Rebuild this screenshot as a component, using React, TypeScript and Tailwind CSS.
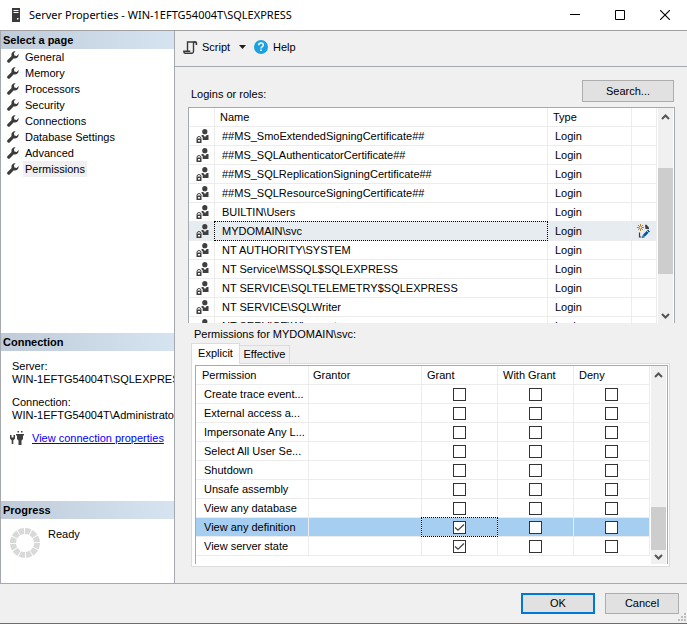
import { useState } from "react";
import type { ReactNode } from "react";

const PAGES = ["General", "Memory", "Processors", "Security", "Connections", "Database Settings", "Advanced", "Permissions"];

const LOGINS = [
  "##MS_SmoExtendedSigningCertificate##",
  "##MS_SQLAuthenticatorCertificate##",
  "##MS_SQLReplicationSigningCertificate##",
  "##MS_SQLResourceSigningCertificate##",
  "BUILTIN\\Users",
  "MYDOMAIN\\svc",
  "NT AUTHORITY\\SYSTEM",
  "NT Service\\MSSQL$SQLEXPRESS",
  "NT SERVICE\\SQLTELEMETRY$SQLEXPRESS",
  "NT SERVICE\\SQLWriter",
  "NT SERVICE\\Winmgmt",
];

const PERMISSIONS = [
  "Create trace event...",
  "External access a...",
  "Impersonate Any L...",
  "Select All User Se...",
  "Shutdown",
  "Unsafe assembly",
  "View any database",
  "View any definition",
  "View server state",
];

const MODES = ["Grant", "With Grant", "Deny"];

function ServerIcon() {
  return (
    <svg width="8" height="14" viewBox="0 0 8 14" aria-hidden="true">
      <path d="M0 0h8v14H0z" fill="#3a3a3a" />
      <path d="M1.500 2.500h5M1.500 4.500h5" stroke="#fff" />
      <path d="M5 10h1.500v1.500H5z" fill="#fff" />
    </svg>
  );
}

function WrenchIcon() {
  return (
    <svg width="12" height="12" viewBox="0 0 12 12" aria-hidden="true">
      <path
        d="M8.600 0.300a3.700 3.700 0 0 0-4 4.800L0.600 8.900a1.500 1.500 0 0 0 2.300 2.300l3.900-4a3.700 3.700 0 0 0 4.800-4.200L9.700 4.900 7.400 4.500 6.900 2.200z"
        fill="#3a3a3a"
      />
    </svg>
  );
}

function ScriptIcon() {
  return (
    <svg width="15" height="13" viewBox="0 0 15 13" fill="none" aria-hidden="true">
      <path d="M4.500 10V1H12.500M10.500 1v9.500q0 1.700-1.700 1.700H2.300Q.8 12.200.8 10.300H7.300" stroke="#3a3a3a" strokeWidth="1.400" />
      <path d="M10.500.3H12.700q1.500 0 1.500 1.600V4H12.600V2h-2.100z" fill="#3a3a3a" />
    </svg>
  );
}

function LoginIcon() {
  return (
    <svg width="13" height="14" viewBox="0 0 13 14" aria-hidden="true">
      <circle cx="8.800" cy="2.700" r="2.600" fill="#3f3f3f" />
      <path d="M5.500 6H7.200L9 8l1.800-2H12.500v5H6.700V8.300L5.500 7.300z" fill="#3f3f3f" />
      <path d="M1 9.500Q1 7.500 3 7.500T5 9.500" stroke="#3f3f3f" fill="none" />
      <path d="M.5 9.500H5.500V14H.5z" fill="#3f3f3f" />
      <path d="M2 11h2v1.500H2z" fill="#fff" />
    </svg>
  );
}

function EditedIcon() {
  return (
    <svg width="14" height="14" viewBox="0 0 14 14" fill="none" aria-hidden="true">
      <path d="M2.500 8.500v4.500H4.500" stroke="#3f3f3f" strokeWidth="1.200" />
      <path d="M8 .8H9.500L12 3.500V5H8.500z" fill="#3f3f3f" />
      <path d="M3.500 0v7M0 3.500h7M1 1l5 5M6 1L1 6" stroke="#c27d1a" />
      <circle cx="3.500" cy="3.500" r="1" fill="#fff" />
      <path d="M6.700 11.800L12 6.500" stroke="#00539c" strokeWidth="2.600" />
      <path d="M5 14l.6-2.800 2.100 2.100z" fill="#00539c" />
      <path d="M9.800 6.800l2 2" stroke="#fff" strokeWidth=".7" />
    </svg>
  );
}

function PlugIcon() {
  return (
    <svg width="14" height="14" viewBox="0 0 14 14" aria-hidden="true">
      <path d="M0 4h1.500v2.500h2V4H5v3.500L3.300 9.500V13H1.700V9.500L0 7.500z" fill="#3f3f3f" />
      <path d="M7.500 0H9v1.500H7.500zM11 0h1.500v1.500H11zM6 3h8v1.500h-1V8L11.500 9.500V14h-3V9.500L7 8V4.500H6z" fill="#3f3f3f" />
    </svg>
  );
}

function SectionTitle({ children }: { children: ReactNode }) {
  return (
    <h2 className="h-[18px] bg-linear-to-r from-[#bfcbd9] to-[#d6e4f1] pl-[2px] leading-[18px] font-bold">
      {children}
    </h2>
  );
}

function Chevron({ down }: { down?: boolean }) {
  return (
    <svg width="9" height="6" viewBox="0 0 9 6" fill="none" aria-hidden="true">
      <path d={down ? "M1 1l3.500 3.500L8 1" : "M1 5l3.500-3.500L8 5"} stroke="#555" strokeWidth="2" />
    </svg>
  );
}

function ScrollBar({ before, after, thumb }: { before: number; after: number; thumb: string }) {
  return (
    <div className="mr-px flex w-[15px] shrink-0 flex-col bg-[#f0f0f0]">
      <button aria-label="Scroll up" className="flex h-[18px] shrink-0 items-center justify-center">
        <Chevron />
      </button>
      <div style={{ flexGrow: before }} />
      <div className={`shrink-0 bg-[#cdcdcd] ${thumb}`} />
      <div style={{ flexGrow: after }} />
      <button aria-label="Scroll down" className="flex h-[14px] shrink-0 items-center justify-center">
        <Chevron down />
      </button>
    </div>
  );
}

const cell = "h-[19px] border-r border-b border-[#ececec] p-0 text-left font-normal whitespace-nowrap";
const focusRect = "pointer-events-none absolute -inset-px border border-dotted border-black";

export default function App() {
  const [page, setPage] = useState("Permissions");
  const [login, setLogin] = useState("MYDOMAIN\\svc");
  const [tab, setTab] = useState("Explicit");
  const [checks, setChecks] = useState<string[]>(["View any definition/Grant", "View server state/Grant"]);

  const toggle = (key: string) =>
    setChecks((prev) => (prev.includes(key) ? prev.filter((k) => k !== key) : [...prev, key]));

  return (
    <div className="flex min-h-screen flex-col border-b border-[#1883d7] bg-[#f0f0f0] font-['Liberation_Sans',Arial,sans-serif] text-[11px] leading-[13px] text-black">
      {/* Title bar */}
      <header className="flex h-[31px] items-center border-b border-[#a0a0a0] bg-white pl-3">
        <ServerIcon />
        <h1 className="ml-[9px] flex-1 truncate font-['Noto_Sans','Open_Sans',sans-serif] text-[11px] leading-[18px]">
          Server Properties - WIN-1EFTG54004T\SQLEXPRESS
        </h1>
        <button aria-label="Minimize" className="flex h-[28px] w-[45px] items-center justify-center">
          <svg width="10" height="10" viewBox="0 0 10 10"><path d="M0 4.500h10" stroke="#000" /></svg>
        </button>
        <button aria-label="Maximize" className="flex h-[28px] w-[45px] items-center justify-center">
          <svg width="10" height="10" viewBox="0 0 10 10" fill="none"><path d="M.5.5h9v9h-9z" stroke="#000" /></svg>
        </button>
        <button aria-label="Close" className="flex h-[28px] w-[45px] items-center justify-center">
          <svg width="10" height="10" viewBox="0 0 10 10"><path d="M0 0l10 10M10 0L0 10" stroke="#000" strokeWidth="1.100" /></svg>
        </button>
      </header>

      <div className="flex flex-1 border-b border-[#a7a9b0]">
        {/* Sidebar */}
        <aside className="flex w-[175px] shrink-0 flex-col overflow-hidden border-x border-[#a7a9b0] bg-white">
          <nav className="flex-1">
            <SectionTitle>Select a page</SectionTitle>
            <ul>
              {PAGES.map((p) => (
                <li key={p} className="flex h-[16px] items-center pl-[6px]">
                  <WrenchIcon />
                  <button
                    onClick={() => setPage(p)}
                    className={`ml-1 h-[16px] px-[2px] leading-[16px] ${p === page ? "bg-[#f0f0f0]" : ""}`}
                  >
                    {p}
                  </button>
                </li>
              ))}
            </ul>
          </nav>
          <section className="h-[168px]">
            <SectionTitle>Connection</SectionTitle>
            <dl className="pt-[9px] pl-[11px] whitespace-nowrap">
              <dt>Server:</dt>
              <dd className="mb-[10px]">WIN-1EFTG54004T\SQLEXPRESS</dd>
              <dt>Connection:</dt>
              <dd>WIN-1EFTG54004T\Administrator</dd>
            </dl>
            <div className="mt-[9px] flex items-center pl-[9px]">
              <PlugIcon />
              <a href="#connection" className="ml-2 whitespace-nowrap text-[#0000ff] underline">View connection properties</a>
            </div>
          </section>
          <section className="h-[82px]">
            <SectionTitle>Progress</SectionTitle>
            <div className="flex pt-[9px] pl-[9px]">
              <svg width="30" height="30" viewBox="0 0 30 30" fill="none" aria-hidden="true">
                <circle cx="15" cy="15" r="12" stroke="#d9d9d9" strokeWidth="6" pathLength="120" strokeDasharray="8.500 1.500" />
              </svg>
              <span className="ml-2">Ready</span>
            </div>
          </section>
        </aside>

        <main className="min-w-0 flex-1">
          {/* Toolbar */}
          <div className="flex h-[36px] items-center border-b border-[#a7a9b0] pb-[3px] pl-2">
            <button className="flex items-center">
              <ScriptIcon />
              <span className="ml-1 w-[28px] text-left">Script</span>
            </button>
            <button aria-label="Script options" className="ml-[9px]">
              <svg width="7" height="4" viewBox="0 0 7 4"><path d="M0 0h7L3.500 4z" fill="#1e1e1e" /></svg>
            </button>
            <button className="ml-2 flex items-center">
              <svg width="14" height="14" viewBox="0 0 14 14" fill="none" aria-hidden="true">
                <circle cx="7" cy="7" r="7" fill="#1ba1e2" />
                <path d="M4.700 5.300q0-2.300 2.300-2.300t2.300 2q0 1-1.200 1.800Q7 7.500 7 8.500" stroke="#fff" strokeWidth="1.500" />
                <path d="M6.200 9.500h1.600v1.600H6.200z" fill="#fff" />
              </svg>
              <span className="ml-[5px]">Help</span>
            </button>
          </div>

          <div className="pt-[13px] pr-3 pb-4 pl-[13px]">
            <div className="flex items-end justify-between pl-[3px]">
              <h2 className="leading-[16px]">Logins or roles:</h2>
              <button className="mr-px h-[22px] w-[92px] border border-[#adadad] bg-[#e1e1e1]">Search...</button>
            </div>

            {/* Logins */}
            <div className="mt-[5px] flex h-[216px] overflow-hidden border-x border-t border-[#a7a9b0] bg-white">
              <div className="mr-px min-w-0 flex-1 overflow-hidden">
                <table className="w-full table-fixed border-separate border-spacing-0">
                  <thead>
                    <tr>
                      <th className={`${cell} w-[26px]`} aria-label="Kind" />
                      <th className={`${cell} pl-[5px]`}>Name</th>
                      <th className={`${cell} w-[84px] pl-[5px]`}>Type</th>
                      <th className={`${cell} w-[25px]`} aria-label="Changed" />
                    </tr>
                  </thead>
                  <tbody>
                    {LOGINS.map((name) => (
                      <tr key={name} onClick={() => setLogin(name)} className={name === login ? "bg-[#e7ecf0]" : ""}>
                        <td className={cell}><span className="flex justify-center pl-[2px]"><LoginIcon /></span></td>
                        <td className={`${cell} relative pl-[7px]`}>
                          {name}
                          {name === login && <span className={focusRect} />}
                        </td>
                        <td className={`${cell} pl-[7px]`}>Login</td>
                        <td className={cell}>
                          {name === "MYDOMAIN\\svc" && <span className="flex justify-center"><EditedIcon /></span>}
                        </td>
                      </tr>
                    ))}
                  </tbody>
                </table>
              </div>
              <ScrollBar before={42} after={35} thumb="h-[106px]" />
            </div>

            <h2 className="mt-[3px] pl-[6px] leading-[16px]">Permissions for {login}:</h2>

            {/* Permissions */}
            <div className="mt-px mr-[5px] ml-[3px]">
              <div role="tablist" className="flex items-end">
                {["Explicit", "Effective"].map((t) => (
                  <button
                    key={t}
                    role="tab"
                    aria-selected={t === tab}
                    onClick={() => setTab(t)}
                    className={
                      t === tab
                        ? "relative -mb-px h-[21px] w-[49px] border border-b-0 border-[#dcdcdc] bg-white pb-[2px]"
                        : "h-[18px] w-[50px] border border-b-0 border-l-0 border-[#dcdcdc] bg-[#f0f0f0]"
                    }
                  >
                    {t}
                  </button>
                ))}
              </div>
              <div className="border border-[#dcdcdc] bg-white pt-px pr-px pb-[2px] pl-[3px]">
                <div className="flex h-[199px] border-x border-t border-[#a7a9b0]">
                  <div className="mr-px min-w-0 flex-1">
                    <table className="w-full table-fixed border-separate border-spacing-0">
                      <thead>
                        <tr>
                          <th className={`${cell} w-[113px] pl-[6px]`}>Permission</th>
                          <th className={`${cell} pl-[4px]`}>Grantor</th>
                          {MODES.map((m) => (
                            <th key={m} className={`${cell} w-[76px] pl-[5px]`}>{m}</th>
                          ))}
                        </tr>
                      </thead>
                      <tbody>
                        {PERMISSIONS.map((p) => {
                          const selected = p === "View any definition";
                          return (
                            <tr key={p} className={selected ? "bg-[#a5cef0]" : ""}>
                              <td className={`${cell} pl-[8px]`}>{p}</td>
                              <td className={cell} />
                              {MODES.map((m) => (
                                <td key={m} className={`${cell} relative`}>
                                  <label className="relative mx-auto block size-[13px]">
                                    <input
                                      type="checkbox"
                                      aria-label={`${m}: ${p}`}
                                      checked={checks.includes(`${p}/${m}`)}
                                      onChange={() => toggle(`${p}/${m}`)}
                                      className="peer block size-[13px] appearance-none border border-[#333] bg-white"
                                    />
                                    <svg width="13" height="13" viewBox="0 0 13 13" fill="none" className="pointer-events-none absolute inset-0 hidden peer-checked:block">
                                      <path d="M2 6.500l3 2.700L11 3.500" stroke="#444" strokeWidth="1.300" />
                                    </svg>
                                  </label>
                                  {selected && m === "Grant" && <span className={focusRect} />}
                                </td>
                              ))}
                            </tr>
                          );
                        })}
                      </tbody>
                    </table>
                  </div>
                  <ScrollBar before={1} after={0} thumb="h-[43px]" />
                </div>
              </div>
            </div>
          </div>
        </main>
      </div>

      {/* Dialog buttons */}
      <footer className="relative flex h-[39px] items-center justify-end gap-[10px] pr-2">
        <button className="h-[21px] w-[74px] border-2 border-[#0078d7] bg-[#e1e1e1]">OK</button>
        <button className="h-[21px] w-[74px] border border-[#adadad] bg-[#e1e1e1]">Cancel</button>
        <svg width="9" height="9" viewBox="0 0 9 9" className="absolute right-0 bottom-px" aria-hidden="true">
          <path d="M6 0h2v2H6zM3 3h2v2H3zM6 3h2v2H6zM0 6h2v2H0zM3 6h2v2H3zM6 6h2v2H6z" fill="#bfbfbf" />
        </svg>
      </footer>
    </div>
  );
}
